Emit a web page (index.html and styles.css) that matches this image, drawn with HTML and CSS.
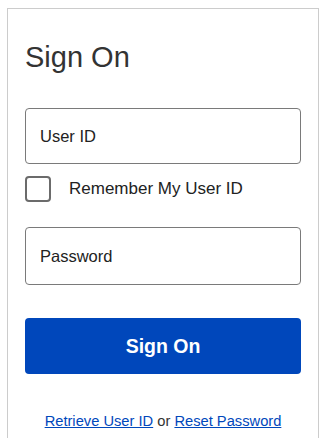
FILE: index.html
```html
<!DOCTYPE html>
<html lang="en">
  <head>
    <meta charset="UTF-8" />
    <meta name="viewport" content="width=device-width, initial-scale=1.0" />

    <link rel="stylesheet" href="styles.css">

    <title>Sign On</title>
  </head>
  <body>
    <div class="card">
      <h1 class="title">Sign On</h1>
      <form class="signon" onsubmit="return false">
        <input class="field userid" type="text" placeholder="User ID" />
        <label class="remember">
          <span class="box"></span>
          Remember My User ID
        </label>
        <input class="field password" type="password" placeholder="Password" />
        <button class="submit" type="submit">Sign On</button>
      </form>
      <div class="links">
        <a href="#">Retrieve User ID</a> or <a href="#">Reset Password</a>
      </div>
    </div>
  </body>
</html>
```

FILE: styles.css
```css
body {
  margin: 0;
  background-color: #fff;
  font-family: "Liberation Sans", Arial, sans-serif;
  color: #222;
}

.card {
  box-sizing: border-box;
  width: 312px;
  margin: 8px 0 0 7px;
  padding: 30px 17px 0 17px;
  border: 1px solid #cccccc;
  border-bottom: none;
  height: 440px;
}

.title {
  margin: 0;
  font-size: 29px;
  line-height: 36px;
  font-weight: normal;
  color: #333;
}

.signon {
  display: flex;
  flex-direction: column;
  margin-top: 33px;
}

.field {
  box-sizing: border-box;
  width: 100%;
  height: 56px;
  margin: 0;
  padding: 0 14px;
  border: 1px solid #7a7a7a;
  border-radius: 4px;
  font-family: inherit;
  font-size: 16.5px;
  color: #222;
  outline: none;
}
.field::placeholder {
  color: #222;
  opacity: 1;
}
.password {
  height: 58px;
  margin-top: 25px;
}

.remember {
  display: flex;
  align-items: center;
  gap: 18px;
  margin-top: 12px;
  font-size: 17px;
  color: #222;
}
.remember .box {
  box-sizing: border-box;
  width: 26px;
  height: 26px;
  border: 2px solid #6b6b6b;
  border-radius: 4px;
}

.submit {
  height: 56px;
  margin-top: 33px;
  border: none;
  border-radius: 4px;
  background-color: #0047bb;
  color: #fff;
  font-family: inherit;
  font-size: 19.5px;
  font-weight: bold;
  cursor: pointer;
}

.links {
  margin-top: 39px;
  text-align: center;
  font-size: 14.7px;
  color: #333;
}
.links a {
  color: #0047bb;
  text-decoration: underline;
}
```
